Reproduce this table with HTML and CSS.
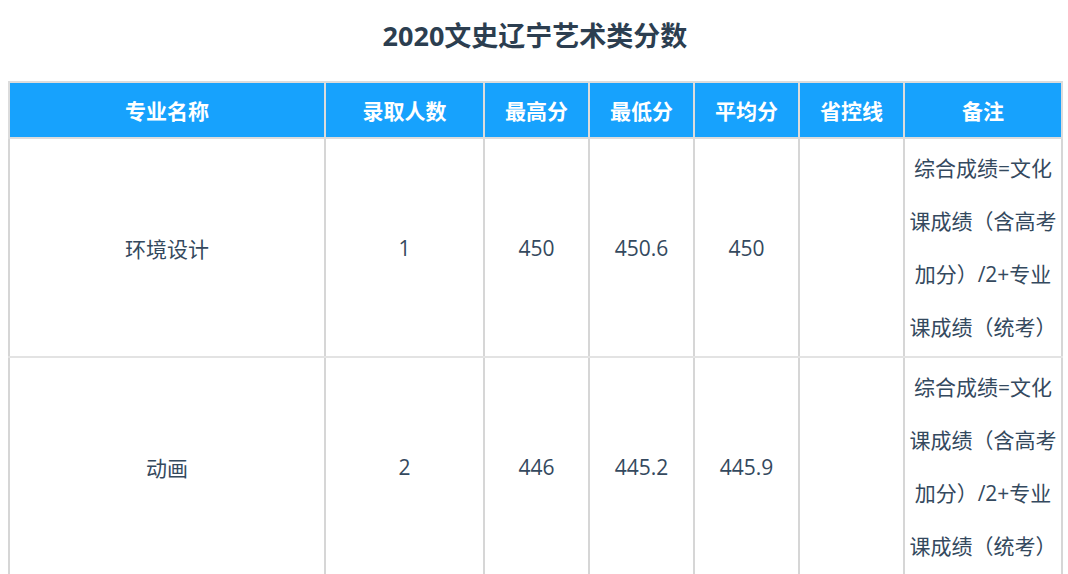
FILE: index.html
```html
<!DOCTYPE html>
<html lang="zh">
<head>
<meta charset="utf-8">
<link rel="stylesheet" href="styles.css">
</head>
<body>
<h1 class="title">2020文史辽宁艺术类分数</h1>
<table class="scores">
  <colgroup>
    <col class="c-name">
    <col class="c-num">
    <col class="c-s">
    <col class="c-s">
    <col class="c-s">
    <col class="c-s">
    <col class="c-note">
  </colgroup>
  <thead>
    <tr>
      <th>专业名称</th>
      <th>录取人数</th>
      <th>最高分</th>
      <th>最低分</th>
      <th>平均分</th>
      <th>省控线</th>
      <th>备注</th>
    </tr>
  </thead>
  <tbody>
    <tr>
      <td>环境设计</td>
      <td>1</td>
      <td>450</td>
      <td>450.6</td>
      <td>450</td>
      <td></td>
      <td class="note">综合成绩=文化课成绩（含高考加分）/2+专业课成绩（统考）</td>
    </tr>
    <tr>
      <td>动画</td>
      <td>2</td>
      <td>446</td>
      <td>445.2</td>
      <td>445.9</td>
      <td></td>
      <td class="note">综合成绩=文化课成绩（含高考加分）/2+专业课成绩（统考）</td>
    </tr>
  </tbody>
</table>
</body>
</html>
```

FILE: styles.css
```css
html, body {
  margin: 0;
  padding: 0;
  background: #ffffff;
}
body {
  font-family: "Open Sans", "Noto Sans CJK SC", sans-serif;
  color: #34495e;
  padding: 0 6px 0 8px;
}
.title {
  margin: 0;
  height: 81px;
  line-height: 72px;
  text-align: center;
  font-size: 27px;
  font-weight: 700;
  color: #2c3e50;
}
.scores {
  width: 1054px;
  border-collapse: collapse;
  table-layout: fixed;
}
.c-name { width: 316px; }
.c-num { width: 159px; }
.c-s { width: 105px; }
.c-note { width: 158px; }
.scores th,
.scores td {
  border: 2px solid #dcdcdc;
  text-align: center;
  vertical-align: middle;
  font-size: 21px;
}
.scores th {
  background: #17a2fd;
  color: #ffffff;
  font-weight: 700;
  height: 54px;
  padding: 0;
  border-color: #dcdcdc;
}
.scores td {
  border-color: #e3e3e3 #d6d6d6;
  padding: 2px 3px;
  height: 213px;
  color: #34495e;
}
.scores td.note {
  line-height: 53px;
}
```
